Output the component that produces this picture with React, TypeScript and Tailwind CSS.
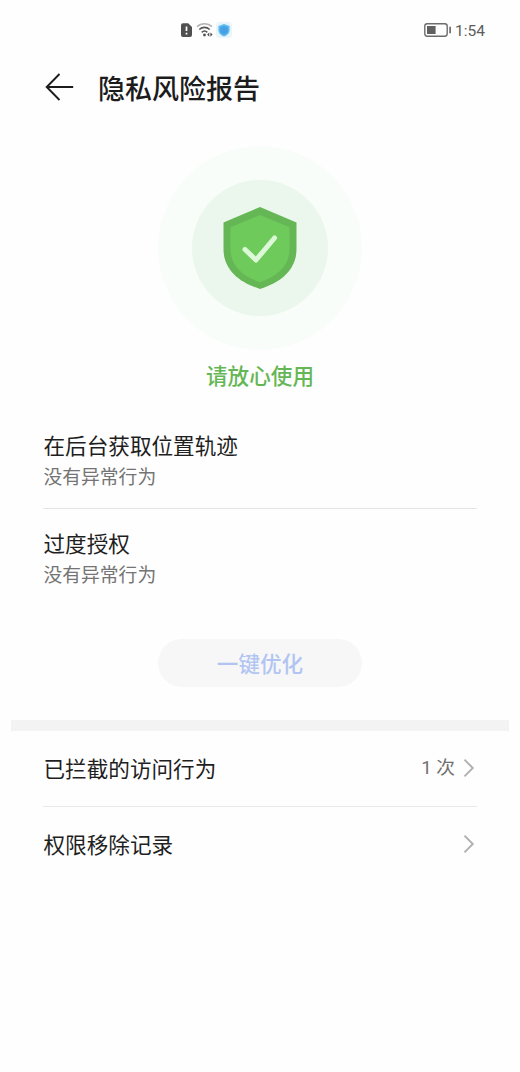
import React from "react";

interface RiskItem {
  title: string;
  status: string;
}

interface RecordRowProps {
  label: string;
  count?: number;
}

const riskItems: RiskItem[] = [
  { title: "在后台获取位置轨迹", status: "没有异常行为" },
  { title: "过度授权", status: "没有异常行为" },
];

const StatusBar = () => {
  return (
    <div className="relative flex h-[60px] items-center justify-end pr-[35px]">
      <div className="absolute left-[180px] top-[22px] flex items-center">
        <svg width="13" height="16" viewBox="0 0 13 16">
          <path d="M1 3.2a2 2 0 0 1 2-2h5.2L12 5v8a2 2 0 0 1-2 2H3a2 2 0 0 1-2-2z" fill="#505050" />
          <path d="M6.5 4.5v4.6M6.5 10.8v1.6" stroke="#fff" strokeWidth="1.7" />
        </svg>
        <svg className="ml-[3px]" width="19" height="16" viewBox="0 0 19 16" fill="none">
          <path d="M1 4.6c4.2-3.9 10.8-3.9 15 0" stroke="#b4b4b4" strokeWidth="1.6" />
          <path d="M3.3 7.5c3-2.8 7.4-2.8 10.4 0" stroke="#565656" strokeWidth="1.6" />
          <path d="M5.7 10.3c1.7-1.5 4-1.5 5.6 0" stroke="#565656" strokeWidth="1.6" />
          <circle cx="8.5" cy="13" r="1.4" fill="#505050" />
          <path d="M13.3 10.4v4.4l-2.2-2.2zM14.4 10.4v4.4l2.2-2.2z" fill="#505050" />
        </svg>
        <svg className="ml-px" width="16" height="16" viewBox="0 0 16 16">
          <rect width="16" height="16" rx="4" fill="#e8f5fb" />
          <path d="M8 2l5.6 2v4.3c0 3-2.4 5-5.6 6.2-3.2-1.2-5.6-3.2-5.6-6.2V4z" fill="#5fbaf0" />
          <path d="M8 3.9l3.8 1.3v3.2c0 2-1.5 3.3-3.8 4.3-2.3-1-3.8-2.3-3.8-4.3V5.2z" fill="#45a0e4" />
        </svg>
      </div>
      <svg width="29" height="16" viewBox="0 0 29 16" fill="none">
        <rect x="1.8" y="1.8" width="22.4" height="12.4" rx="2.4" stroke="#6c6c6c" strokeWidth="1.4" />
        <rect x="4" y="4" width="8.6" height="8" fill="#606060" />
        <path d="M27.1 4.8v6.4" stroke="#6c6c6c" strokeWidth="1.7" />
      </svg>
      <span className="ml-[3px] pt-[3px] font-[Roboto] text-[15.5px] leading-none text-[#5c5c5c]">1:54</span>
    </div>
  );
};

const Header = () => {
  return (
    <header className="flex h-[54px] items-center pl-[45px]">
      <svg width="29" height="28" viewBox="0 0 29 28" fill="none" stroke="#1c1c1c" strokeWidth="1.9">
        <path d="M14.5 1L1.7 14l12.8 13M1.7 14H28.2" />
      </svg>
      <h1 className="ml-6 text-[27px] font-medium leading-none text-[#1c1c1c]">隐私风险报告</h1>
    </header>
  );
};

const SafeShield = () => {
  return (
    <div className="flex size-[204px] items-center justify-center rounded-full bg-[#f8fdf9]">
      <div className="flex size-[136px] items-center justify-center rounded-full bg-[#ebf6ec]">
        <svg width="74" height="84" viewBox="0 0 74 84">
          <path d="M37 1L73.5 16.5V43C73.5 63 59 76 37 83C15 76 .5 63 .5 43V16.5z" fill="#65b755" />
          <path d="M37 9L66.5 21.3V43C66.5 59 55.5 70 37 76.2C18.5 70 7.5 59 7.5 43V21.3z" fill="#6dca5b" />
          <path
            d="M22 43.5L33 54L51.5 32"
            fill="none"
            stroke="#dcf8d6"
            strokeWidth="5"
            strokeLinecap="round"
            strokeLinejoin="round"
          />
        </svg>
      </div>
    </div>
  );
};

const Chevron = () => {
  return (
    <svg width="12" height="20" viewBox="0 0 12 20" fill="none" stroke="#b0b0b0" strokeWidth="1.9">
      <path d="M1.5 1.7L9.8 10l-8.3 8.3" />
    </svg>
  );
};

const RecordRow: React.FC<RecordRowProps> = ({ label, count }) => {
  return (
    <div className="flex h-[75px] items-center justify-between pl-[0.5px] pr-0.5">
      <span className="pb-px text-[21.6px] leading-none text-[#1f1f1f]">{label}</span>
      <div className="flex items-center gap-2">
        {count !== undefined && (
          <span className="pt-px font-[Roboto,'Noto_Sans_CJK_SC',sans-serif] text-[18.7px] leading-none text-[#707070]">
            {count} 次
          </span>
        )}
        <Chevron />
      </div>
    </div>
  );
};

const App = () => {
  return (
    <div className="min-h-[1072px] w-[520px] bg-[#fefefe] font-['Noto_Sans_CJK_SC',sans-serif]">
      <StatusBar />
      <Header />
      <section className="flex flex-col items-center pt-[31.5px]">
        <SafeShield />
        <p className="mt-[9.5px] text-[21.6px] font-medium leading-8 text-[#65b755]">请放心使用</p>
      </section>

      <section className="mt-[19px] px-[43px]">
        {riskItems.map((item, i) => (
          <div key={item.title} className={i > 0 ? "border-t border-[#e4e4e4] pt-[18px]" : "pb-[17px] pt-[19px]"}>
            <h2 className="pl-[0.5px] text-[21.6px] leading-8 text-[#1f1f1f]">{item.title}</h2>
            <p className="pl-[0.5px] text-[18.8px] leading-[30px] text-[#747474]">{item.status}</p>
          </div>
        ))}
      </section>

      <button className="mx-auto mt-[50px] flex h-12 w-[204px] items-center justify-center rounded-full bg-[#f7f7f7] text-[21.6px] font-medium leading-none text-[#b2c5f2]">
        一键优化
      </button>

      <div className="mx-[11px] mt-[32.5px] h-[11px] bg-[#f3f3f3]" />

      <section className="px-[43px]">
        <RecordRow label="已拦截的访问行为" count={1} />
        <div className="h-px bg-[#e8e8e8]" />
        <RecordRow label="权限移除记录" />
      </section>
    </div>
  );
};

export default App;
